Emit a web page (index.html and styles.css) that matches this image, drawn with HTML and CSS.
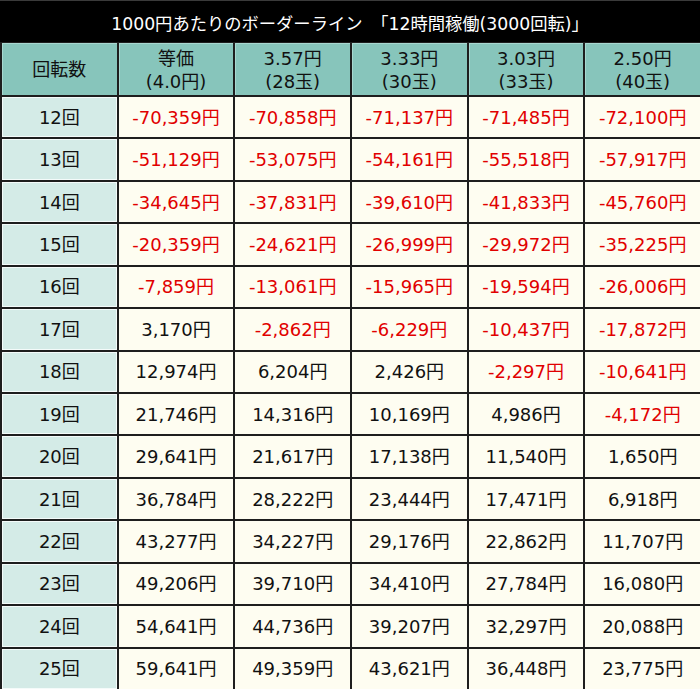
FILE: index.html
```html
<!DOCTYPE html>
<html lang="ja">
<head>
<meta charset="utf-8">
<link rel="stylesheet" href="styles.css">
</head>
<body>
<div class="board">
  <div class="title">1000円あたりのボーダーライン　「12時間稼働(3000回転)」</div>
  <div class="grid">
    <div class="cell head">回転数</div>
    <div class="cell head"><span>等価</span><span>(4.0円)</span></div>
    <div class="cell head"><span>3.57円</span><span>(28玉)</span></div>
    <div class="cell head"><span>3.33円</span><span>(30玉)</span></div>
    <div class="cell head"><span>3.03円</span><span>(33玉)</span></div>
    <div class="cell head"><span>2.50円</span><span>(40玉)</span></div>

    <div class="cell rot">12回</div><div class="cell neg">-70,359円</div><div class="cell neg">-70,858円</div><div class="cell neg">-71,137円</div><div class="cell neg">-71,485円</div><div class="cell neg">-72,100円</div>
    <div class="cell rot">13回</div><div class="cell neg">-51,129円</div><div class="cell neg">-53,075円</div><div class="cell neg">-54,161円</div><div class="cell neg">-55,518円</div><div class="cell neg">-57,917円</div>
    <div class="cell rot">14回</div><div class="cell neg">-34,645円</div><div class="cell neg">-37,831円</div><div class="cell neg">-39,610円</div><div class="cell neg">-41,833円</div><div class="cell neg">-45,760円</div>
    <div class="cell rot">15回</div><div class="cell neg">-20,359円</div><div class="cell neg">-24,621円</div><div class="cell neg">-26,999円</div><div class="cell neg">-29,972円</div><div class="cell neg">-35,225円</div>
    <div class="cell rot">16回</div><div class="cell neg">-7,859円</div><div class="cell neg">-13,061円</div><div class="cell neg">-15,965円</div><div class="cell neg">-19,594円</div><div class="cell neg">-26,006円</div>
    <div class="cell rot">17回</div><div class="cell">3,170円</div><div class="cell neg">-2,862円</div><div class="cell neg">-6,229円</div><div class="cell neg">-10,437円</div><div class="cell neg">-17,872円</div>
    <div class="cell rot">18回</div><div class="cell">12,974円</div><div class="cell">6,204円</div><div class="cell">2,426円</div><div class="cell neg">-2,297円</div><div class="cell neg">-10,641円</div>
    <div class="cell rot">19回</div><div class="cell">21,746円</div><div class="cell">14,316円</div><div class="cell">10,169円</div><div class="cell">4,986円</div><div class="cell neg">-4,172円</div>
    <div class="cell rot">20回</div><div class="cell">29,641円</div><div class="cell">21,617円</div><div class="cell">17,138円</div><div class="cell">11,540円</div><div class="cell">1,650円</div>
    <div class="cell rot">21回</div><div class="cell">36,784円</div><div class="cell">28,222円</div><div class="cell">23,444円</div><div class="cell">17,471円</div><div class="cell">6,918円</div>
    <div class="cell rot">22回</div><div class="cell">43,277円</div><div class="cell">34,227円</div><div class="cell">29,176円</div><div class="cell">22,862円</div><div class="cell">11,707円</div>
    <div class="cell rot">23回</div><div class="cell">49,206円</div><div class="cell">39,710円</div><div class="cell">34,410円</div><div class="cell">27,784円</div><div class="cell">16,080円</div>
    <div class="cell rot">24回</div><div class="cell">54,641円</div><div class="cell">44,736円</div><div class="cell">39,207円</div><div class="cell">32,297円</div><div class="cell">20,088円</div>
    <div class="cell rot">25回</div><div class="cell">59,641円</div><div class="cell">49,359円</div><div class="cell">43,621円</div><div class="cell">36,448円</div><div class="cell">23,775円</div>
  </div>
</div>
</body>
</html>
```

FILE: styles.css
```css
* { box-sizing: border-box; }
html, body { margin: 0; padding: 0; background: #fff; }
body {
  font-family: "DejaVu Sans", "Noto Sans CJK JP", sans-serif;
}
.board {
  width: 700px;
  height: 689px;
  background: #111;
  display: flex;
  flex-direction: column;
}
.title {
  height: 42px;
  background: #000;
  border-top: 1px solid #3a3a3a;
  color: #fff;
  font-size: 17.3px;
  display: flex;
  align-items: center;
  justify-content: center;
  padding-top: 2px;
}
.grid {
  flex: 1;
  display: grid;
  grid-template-columns: repeat(6, 1fr);
  grid-template-rows: 52px repeat(14, 1fr);
  gap: 2px;
  padding: 1px 0 0 2px;
  background: #1e1e1e;
}
.cell {
  background: #fefdf1;
  color: #111;
  font-size: 18px;
  line-height: 22px;
  display: flex;
  flex-direction: column;
  align-items: center;
  justify-content: center;
  text-align: center;
  padding-top: 1px;
}
.head {
  background: #87c5bb;
  line-height: 23px;
  box-shadow: inset 1px 1px 0 #a8d8d0;
}
.rot {
  background: #d4ebe7;
  box-shadow: inset 1px 1px 0 #f4fbfa, inset -1px -1px 0 #f4fbfa;
}
.neg { color: #e10000; }
```
